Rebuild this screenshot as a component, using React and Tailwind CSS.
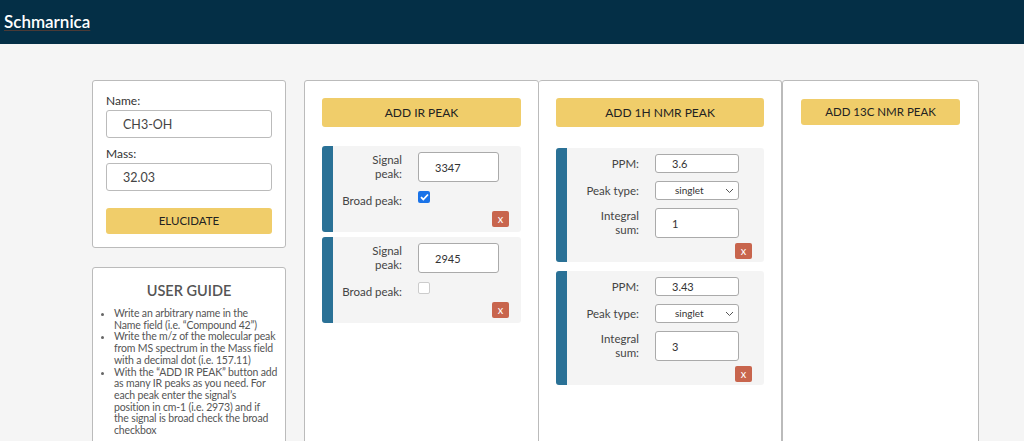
import React from 'react';

const font = { fontFamily: '"Lato", "Noto Sans", sans-serif' };

const Field = ({ label, value }) => (
    <div className="flex flex-col">
        <label className="text-[12px] leading-[16px] text-[#333] mb-[1px]">{label}</label>
        <input
            readOnly
            value={value}
            className="h-[28px] w-full border border-[#bbb] rounded-[3px] bg-white pl-[16px] text-[12.5px] text-[#444] outline-none"
        />
    </div>
);

const RemoveBtn = () => (
    <button className="w-[17px] h-[16px] rounded-[2px] bg-[#c8654d] text-white text-[11px] leading-[16px] flex items-center justify-center">x</button>
);

const Checkbox = ({ checked }) =>
    checked ? (
        <span className="ml-[16px] w-[12px] h-[12px] rounded-[2px] bg-[#1a73e8] flex items-center justify-center">
            <svg width="9" height="8" viewBox="0 0 9 8" fill="none" stroke="white" strokeWidth="1.8"><path d="M1 4.2l2.3 2.3L8 1.5" /></svg>
        </span>
    ) : (
        <span className="ml-[16px] w-[12px] h-[12px] rounded-[2px] bg-white border border-[#ccc]" />
    );

const IrPeak = ({ value, broad }) => (
    <div className="flex rounded-[3px] bg-[#f4f4f4] overflow-hidden">
        <div className="w-[11px] bg-[#2a7196] shrink-0" />
        <div className="flex-1 pt-[6px] pb-[5px] pr-[12px]">
            <div className="flex items-center">
                <div className="w-[69px] text-right text-[11.5px] leading-[14px] text-[#444]">Signal<br />peak:</div>
                <input readOnly value={value} className="ml-[16px] h-[30px] w-[81px] border border-[#aaa] rounded-[3px] bg-white pl-[16px] text-[11px] text-[#333] outline-none" />
            </div>
            <div className="flex items-start mt-[9px]">
                <div className="w-[69px] text-right text-[11.5px] leading-[14px] text-[#444] pt-[3px]">Broad peak:</div>
                <Checkbox checked={broad} />
            </div>
            <div className="flex justify-end mt-[3px]">
                <RemoveBtn />
            </div>
        </div>
    </div>
);

const NmrPeak = ({ ppm, integral }) => (
    <div className="flex rounded-[3px] bg-[#f4f4f4] overflow-hidden">
        <div className="w-[11px] bg-[#2a7196] shrink-0" />
        <div className="flex-1 pt-[6px] pb-[3px] pr-[12px]">
            <div className="flex items-center">
                <div className="w-[72px] text-right text-[11.5px] text-[#444]">PPM:</div>
                <input readOnly value={ppm} className="ml-[16px] h-[19px] w-[84px] border border-[#aaa] rounded-[3px] bg-white pl-[16px] text-[11px] text-[#333] outline-none" />
            </div>
            <div className="flex items-center mt-[8px]">
                <div className="w-[72px] text-right text-[11.5px] text-[#444]">Peak type:</div>
                <div className="ml-[16px] h-[19px] w-[84px] border border-[#aaa] rounded-[3px] bg-white flex items-center justify-between pl-[19px] pr-[4px] text-[10px] text-[#333]">
                    <span>singlet</span>
                    <svg width="9" height="6" viewBox="0 0 9 6" fill="none" stroke="#555" strokeWidth="1"><path d="M1 1l3.5 3.5L8 1" /></svg>
                </div>
            </div>
            <div className="flex items-center mt-[8px]">
                <div className="w-[72px] text-right text-[11.5px] leading-[14px] text-[#444]">Integral<br />sum:</div>
                <input readOnly value={integral} className="ml-[16px] h-[30px] w-[84px] border border-[#aaa] rounded-[3px] bg-white pl-[16px] text-[11px] text-[#333] outline-none" />
            </div>
            <div className="flex justify-end mt-[5px]">
                <RemoveBtn />
            </div>
        </div>
    </div>
);

const AddBtn = ({ children, className }) => (
    <button className={`w-full rounded-[3px] bg-[#f0cd6a] text-[#222] ${className}`}>{children}</button>
);

const App = () => {
    return (
        <div className="min-h-[441px] h-[441px] overflow-hidden bg-[#f5f5f5]" style={font}>
            <header className="h-[44px] bg-[#042f46] flex items-center px-[4px]">
                <span className="text-white text-[17px] font-semibold underline decoration-[#4a3a36] underline-offset-[2px]">Schmarnica</span>
            </header>

            <div className="flex pt-[36px] pl-[92px]">
                <div className="w-[194px] shrink-0 flex flex-col gap-[19px]">
                    <div className="bg-white border border-[#bbb] rounded-[3px] px-[13px] pt-[12px] pb-[13px] flex flex-col gap-[8px]">
                        <Field label="Name:" value="CH3-OH" />
                        <Field label="Mass:" value="32.03" />
                        <button className="mt-[9px] h-[26px] rounded-[3px] bg-[#f0cd6a] text-[11.5px] text-[#222]">ELUCIDATE</button>
                    </div>
                    <div className="bg-white border border-[#bbb] rounded-[3px] pl-[12px] pr-[8px] pt-[12px] h-[200px]">
                        <h2 className="text-center text-[14.5px] leading-[22px] font-semibold text-[#555] pr-[4px]">USER GUIDE</h2>
                        <ul className="mt-[6px] list-disc pl-[9px] text-[10.5px] tracking-[-0.15px] leading-[11.7px] text-[#555] marker:text-[#666] whitespace-nowrap">
                            <li>Write an arbitrary name in the<br />Name field (i.e. “Compound 42”)</li>
                            <li>Write the m/z of the molecular peak<br />from MS spectrum in the Mass field<br />with a decimal dot (i.e. 157.11)</li>
                            <li>With the “ADD IR PEAK” button add<br />as many IR peaks as you need. For<br />each peak enter the signal’s<br />position in cm-1 (i.e. 2973) and if<br />the signal is broad check the broad<br />checkbox</li>
                        </ul>
                    </div>
                </div>

                <div className="ml-[18px] flex">
                    <div className="w-[235px] h-[400px] bg-white border border-[#bbb] rounded-t-[3px] px-[17px] pt-[17px]">
                        <AddBtn className="h-[29px] text-[12px]">ADD IR PEAK</AddBtn>
                        <div className="mt-[19px] flex flex-col gap-[5px]">
                            <IrPeak value="3347" broad />
                            <IrPeak value="2945" broad={false} />
                        </div>
                    </div>
                    <div className="w-[243px] h-[400px] bg-white border border-l-0 border-[#bbb] rounded-t-[3px] px-[17px] pt-[17px]">
                        <AddBtn className="h-[29px] text-[12px]">ADD 1H NMR PEAK</AddBtn>
                        <div className="mt-[21px] flex flex-col gap-[9px]">
                            <NmrPeak ppm="3.6" integral="1" />
                            <NmrPeak ppm="3.43" integral="3" />
                        </div>
                    </div>
                    <div className="w-[197px] h-[400px] bg-white border border-[#bbb] rounded-t-[3px] px-[18px] pt-[17px]">
                        <AddBtn className="h-[26px] text-[11.5px]">ADD 13C NMR PEAK</AddBtn>
                    </div>
                </div>
            </div>
        </div>
    );
};

export default App;
